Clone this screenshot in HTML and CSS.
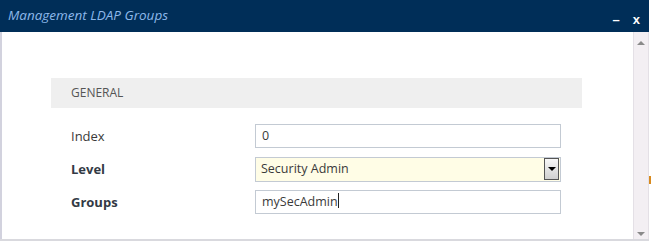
FILE: index.html
```html
<!DOCTYPE html>
<html lang="en">
<head>
    <meta charset="UTF-8">
    <title>Management LDAP Groups</title>
    <link rel="stylesheet" href="styles.css">
</head>
<body>
    <div class="page">
        <div class="dialog">
            <div class="titlebar">
                <span class="title">Management LDAP Groups</span>
                <span class="controls">
                    <span class="btn-min">&ndash;</span>
                    <span class="btn-close">x</span>
                </span>
            </div>
            <div class="content">
                <div class="pane">
                    <div class="section-head">GENERAL</div>
                    <div class="rows">
                        <div class="row">
                            <label class="label">Index</label>
                            <div class="field">0</div>
                        </div>
                        <div class="row">
                            <label class="label bold">Level</label>
                            <div class="field select">
                                <span>Security Admin</span>
                                <span class="arrow-btn"><span class="tri"></span></span>
                            </div>
                        </div>
                        <div class="row">
                            <label class="label bold">Groups</label>
                            <div class="field">mySecAdmin<span class="caret"></span></div>
                        </div>
                    </div>
                </div>
                <div class="scrollbar">
                    <span class="sb-up"></span>
                    <span class="sb-down"></span>
                </div>
            </div>
        </div>
        <div class="backdrop"><span class="blip"></span></div>
    </div>
</body>
</html>
```

FILE: styles.css
```css
body {
    margin: 0;
    padding: 0;
    font-family: "Open Sans", Arial, sans-serif;
    background-color: #ffffff;
}

.page {
    display: flex;
    width: 652px;
    height: 244px;
    overflow: hidden;
}

.dialog {
    width: 649px;
    display: flex;
    flex-direction: column;
}

.titlebar {
    height: 32px;
    background-color: #002e58;
    display: flex;
    align-items: center;
    justify-content: space-between;
    padding: 0 9px 0 8px;
}

.title {
    color: #8db8ea;
    font-style: italic;
    font-size: 13.5px;
    margin-top: -2px;
}

.controls {
    display: flex;
    gap: 13px;
    color: #ffffff;
    font-weight: bold;
    font-size: 13px;
    font-family: Arial, sans-serif;
    margin-top: 6px;
}

.content {
    display: flex;
    height: 207px;
    border-bottom: 2px solid #d9d9de;
}

.pane {
    flex: 1;
    border-left: 2px solid #d2d2de;
    padding: 46px 0 0 49px;
}

.section-head {
    width: 511px;
    height: 30px;
    line-height: 30px;
    background-color: #efefef;
    padding-left: 20px;
    font-size: 12px;
    color: #555555;
}

.rows {
    display: flex;
    flex-direction: column;
    gap: 9px;
    margin-top: 16px;
    padding-left: 20px;
}

.row {
    display: flex;
    align-items: center;
    height: 24px;
}

.label {
    width: 184px;
    font-size: 13px;
    color: #3a3a3a;
}

.label.bold {
    font-weight: bold;
    color: #333a45;
}

.field {
    width: 298px;
    height: 22px;
    line-height: 22px;
    border: 1px solid #c3cad3;
    padding-left: 6px;
    font-size: 12.5px;
    color: #3a3a3a;
    display: flex;
    align-items: center;
}

.field.select {
    background-color: #fffde6;
    padding-left: 5px;
    width: 299px;
    height: 23px;
    justify-content: space-between;
}

.arrow-btn {
    width: 13px;
    height: 20px;
    border: 1px solid #555555;
    background: linear-gradient(#f8f8f8, #d0d0d0);
    display: flex;
    align-items: center;
    justify-content: center;
    margin-right: 1px;
}

.tri {
    width: 0;
    height: 0;
    border-left: 4px solid transparent;
    border-right: 4px solid transparent;
    border-top: 4px solid #000000;
}

.caret {
    display: inline-block;
    width: 1px;
    height: 15px;
    margin-top: -3px;
    background-color: #222222;
}

.scrollbar {
    width: 14px;
    background-color: #f3eff3;
    border-left: 1px solid #e4e0e6;
    border-right: 1px solid #e4e0e6;
    display: flex;
    flex-direction: column;
    justify-content: space-between;
    align-items: center;
    padding: 9px 0 3px;
}

.sb-up {
    width: 0;
    height: 0;
    border-left: 4px solid transparent;
    border-right: 4px solid transparent;
    border-bottom: 4px solid #8a8a8a;
}

.sb-down {
    width: 0;
    height: 0;
    border-left: 4px solid transparent;
    border-right: 4px solid transparent;
    border-top: 4px solid #8a8a8a;
}

.backdrop {
    flex: 1;
    background-color: #ffffff;
    position: relative;
}

.blip {
    position: absolute;
    left: 0;
    top: 176px;
    width: 2px;
    height: 8px;
    background-color: #d88a1e;
}
```
